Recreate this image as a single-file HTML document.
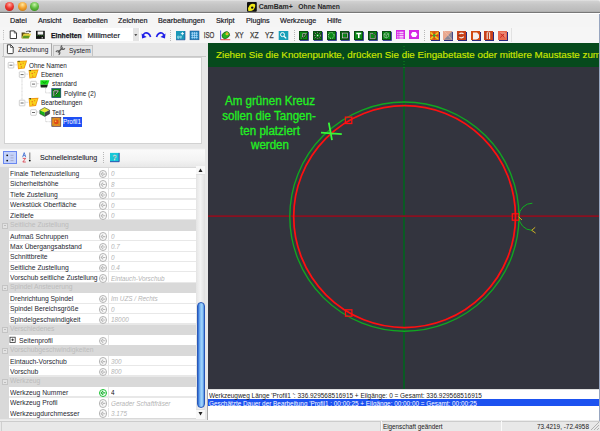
<!DOCTYPE html>
<html><head><meta charset="utf-8">
<style>
*{margin:0;padding:0;box-sizing:border-box}
html,body{width:600px;height:431px;overflow:hidden;background:#ececec;font-family:"Liberation Sans",sans-serif;color:#111}
.a{position:absolute;white-space:nowrap}
svg{position:absolute;left:0;top:0;overflow:visible}
#title{left:0;top:0;width:600px;height:13.3px;background:linear-gradient(#e4e4e4 0,#d0d0d0 1.5px,#c6c6c6 40%,#bababa 92%,#a8a8a8);border-bottom:1.2px solid #787878;border-radius:3px 3px 0 0}
.light{position:absolute;top:2.2px;width:9px;height:9px;border-radius:50%}
#menu{left:0;top:13.3px;width:600px;height:13.7px;background:#f5f5f5;border-top:1px solid #fff}
#menu span{position:absolute;top:1.4px;font-size:8px;line-height:10px;color:#1a1a26;-webkit-text-stroke:0.2px #1a1a26;transform:scaleX(0.9);transform-origin:0 0}
#tb{left:0;top:27px;width:600px;height:16px;background:#f6f6f6}
.ic{position:absolute;top:31px;width:9px;height:9px}
.gi{background:#0a8a16;border:0.6px solid #0a4a12;box-shadow:0.8px 0.8px 0 #18208a}
.mi{background:#d428e4}
.oi{background:#d8501a;box-shadow:1px 1px 0 #2a2a80}
.sep{position:absolute;top:30px;width:1px;height:11px;border-left:1px dotted #b8b8b8}
#left{left:0;top:43px;width:208px;height:377px;background:#e8e8e8}
#canvas{left:208px;top:43px;width:391px;height:346px;background:#33343e;overflow:hidden}
#msg{left:207px;top:389px;width:392px;height:31.3px;background:#fff;border-left:1px solid #a8a8a8;border-top:1px solid #e0e0e0}
#status{left:0;top:420.8px;width:600px;height:10.2px;background:#e8e8e8;border-top:1px solid #cccccc}
.tree span.t{position:absolute;font-size:6.3px;color:#1a1a2a}
.pg{position:absolute;left:0;width:196.2px;height:10.42px}
.pg .n{position:absolute;left:10px;top:1.7px;font-size:7.7px;line-height:1;color:#262630;transform:scaleX(0.88);transform-origin:0 0}
.pg .v{position:absolute;left:110.5px;top:2.1px;font-size:7.4px;line-height:1;font-style:italic;color:#b4b4b4;transform:scaleX(0.862);transform-origin:0 0}
.pg.c{background:#d9d9d9}
.pg.c .n{color:#bcbcbc;top:0.5px}
.pg.r{background:linear-gradient(#fff 0,#fff 9.5px,#e8e8e8 9.5px)}
.pg.r:before{content:"";position:absolute;left:0;top:0;width:8.7px;height:10.42px;background:#d9d9d9}
.pg .o{position:absolute;left:98.8px;top:1.5px;width:8.6px;height:8.6px;border-radius:50%;border:1px solid #b4b4b4;background:#fafafa}
.pg .o.g{border:1.2px solid #18c030;background:#fff}
.pg .d{position:absolute;left:108.3px;top:0;width:1px;height:9.5px;background:#e4e4e4}
.cb{position:absolute;left:1.5px;top:2.3px;width:6px;height:6px;border:1px solid #c4c4c4;background:#e2e2e2}
.cb:after{content:"";position:absolute;left:1px;top:1.6px;width:2.5px;height:0.8px;background:#bcbcbc}
</style></head><body>

<div id="title" class="a">
  <div class="light" style="left:4.6px;background:radial-gradient(circle at 50% 30%,#ffb0a8 0,#f03a30 45%,#b01010 100%)"></div>
  <div class="light" style="left:17.6px;background:radial-gradient(circle at 50% 30%,#ffe8a0 0,#f4a430 45%,#b86a08 100%)"></div>
  <div class="light" style="left:30.2px;background:radial-gradient(circle at 50% 30%,#c8f4a8 0,#62be40 45%,#2a8010 100%)"></div>
  <svg width="600" height="20"><rect x="247" y="2" width="9.8" height="9.8" rx="1" fill="#111"/><path d="M248.2 10.8q-0.6-3.6 1.6-5.8q2.6-2.2 5.2-0.8q0.8 2.8-1.2 5.2q-2.4 2.2-5.6 1.4z" fill="#f0e818"/><circle cx="252.2" cy="7.6" r="1.2" fill="#111"/></svg>
  <span class="a" style="left:258.7px;top:3px;font-size:6.95px;font-weight:bold;color:#262626">CamBam+</span>
  <span class="a" style="left:298.3px;top:3px;font-size:6.75px;font-weight:bold;color:#262626">Ohne Namen</span>
</div>

<div id="menu" class="a">
<span style="left:10px">Datei</span>
<span style="left:37.5px">Ansicht</span>
<span style="left:73px">Bearbeiten</span>
<span style="left:117.5px">Zeichnen</span>
<span style="left:158.3px">Bearbeitungen</span>
<span style="left:216px">Skript</span>
<span style="left:245.7px">Plugins</span>
<span style="left:280px">Werkzeuge</span>
<span style="left:326.7px">Hilfe</span>
</div>
<div id="tb" class="a"></div>
<svg width="600" height="431" style="z-index:2">
<rect x="3" y="30" width="1" height="1" fill="#b8b8b8"/>
<rect x="3" y="32.2" width="1" height="1" fill="#b8b8b8"/>
<rect x="3" y="34.4" width="1" height="1" fill="#b8b8b8"/>
<rect x="3" y="36.6" width="1" height="1" fill="#b8b8b8"/>
<rect x="3" y="38.8" width="1" height="1" fill="#b8b8b8"/>
<path d="M10.2 30.9h4.1l2.2 2.2v5.4h-6.3z" fill="#fff" stroke="#222" stroke-width="0.9"/><path d="M14.3 30.9v2.2h2.2" fill="none" stroke="#222" stroke-width="0.6"/>
<path d="M21.6 32.4h3l0.8 0.8h3.6v5h-7.4z" fill="#5a4a10"/><path d="M21.6 38.2l2-4.4h7.6l-2.2 4.4z" fill="#e8d040"/><path d="M22.2 38.2l1.4-2.4h6.2l-1.2 2.4z" fill="#5a9a20"/><path d="M25.8 32q2.2-1.6 4.2-0.6" fill="none" stroke="#333" stroke-width="0.8"/><path d="M29.6 30.6l1.6 1.2-1.8 0.8z" fill="#111"/>
<rect x="36" y="30.8" width="8.8" height="8.1" fill="#141414"/><rect x="37.6" y="31.5" width="5.6" height="3.1" fill="#f4f4f4"/><path d="M36.8 35.6h7.2" stroke="#2a8a20" stroke-width="0.8" stroke-dasharray="1 1"/><rect x="41.6" y="37.2" width="1.3" height="1.2" fill="#ddd"/>
<path d="M150.6 37 C149.6 33.6 147.2 32.4 145.2 33.1 C144.2 33.5 143.6 34.3 143.2 35.2" fill="none" stroke="#2020e8" stroke-width="1.6"/><path d="M141.6 33.4L142.1 38.4L146.6 37.1z" fill="#2020e8"/>
<path d="M156.5 37 C157.5 33.6 159.9 32.4 161.9 33.1 C162.9 33.5 163.5 34.3 163.9 35.2" fill="none" stroke="#2020e8" stroke-width="1.6"/><path d="M165.5 33.4L165.0 38.4L160.5 37.1z" fill="#2020e8"/>
<rect x="176" y="31" width="9" height="8.8" fill="#1a98b8"/><path d="M176 39.8h9v-8.8" fill="none" stroke="#1a3a90" stroke-width="0.6"/><path d="M180.8 33.6h3.2 M182.4 32v3.2" stroke="#f0faff" stroke-width="0.9"/><path d="M177.6 36.2h1.6v1.6h-1.6z M180.2 36.2h1.2v1.2h-1.2z M177.6 38.2h1.4 M180.2 38.2h1.2" fill="none" stroke="#c8eef8" stroke-width="0.6"/>
<rect x="190" y="31" width="9" height="8.8" fill="#2288c0"/><path d="M191.2 33.2h6.6 M191.2 35.4h6.6 M191.2 37.6h6.6 M192.4 32v6.6 M194.5 32v6.6 M196.6 32v6.6" stroke="#b8e0ff" stroke-width="0.7"/><rect x="190" y="31" width="9" height="8.8" fill="none" stroke="#1a4a8a" stroke-width="0.5"/>
<text x="203.8" y="38.2" font-size="8.2" font-family="Liberation Sans" fill="#4a4040" stroke="#4a4040" stroke-width="0.25" textLength="10.6" lengthAdjust="spacingAndGlyphs">ISO</text>
<path d="M220.6 30.5v9.2" fill="none" stroke="#3030e0" stroke-width="0.8"/><path d="M220.6 39.7h9.6" stroke="#e82020" stroke-width="0.8"/><ellipse cx="225.8" cy="35.2" rx="4" ry="3.2" transform="rotate(-35 225.8 35.2)" fill="#28b020" stroke="#1a3a10" stroke-width="0.5"/><circle cx="227" cy="33.8" r="1.5" fill="#f0e030"/><circle cx="227" cy="33.8" r="0.6" fill="#c03030"/>
<text x="235" y="38.2" font-size="8.2" font-family="Liberation Sans" fill="#404040" stroke="#404040" stroke-width="0.25" textLength="8.6" lengthAdjust="spacingAndGlyphs">XY</text>
<text x="250" y="38.2" font-size="8.2" font-family="Liberation Sans" fill="#404040" stroke="#404040" stroke-width="0.25" textLength="8.6" lengthAdjust="spacingAndGlyphs">XZ</text>
<text x="265" y="38.2" font-size="8.2" font-family="Liberation Sans" fill="#404040" stroke="#404040" stroke-width="0.25" textLength="8.6" lengthAdjust="spacingAndGlyphs">YZ</text>
<rect x="278.7" y="31" width="9.6" height="9" fill="#18a0b8"/><circle cx="282.5" cy="34.6" r="2" fill="none" stroke="#fff" stroke-width="1"/><path d="M284 36.2l2.2 2.2" stroke="#fff" stroke-width="1.3"/>
</svg>
<div class="sep" style="left:170px"></div>
<div class="sep" style="left:294px"></div>
<div class="sep" style="left:424px"></div>
<div class="a" style="left:510.5px;top:28px;width:1px;height:14px;background:#e2e2e2"></div>
<span class="a" style="left:51.3px;top:31.64px;font-size:7.4px;line-height:1;transform:scaleX(0.92);transform-origin:0 0;font-weight:bold;color:#141420;-webkit-text-stroke:0.25px #141420">Einheiten</span>
<div class="a" style="left:85px;top:28.4px;width:54.5px;height:13px;background:#fff"></div>
<div class="a" style="left:132.6px;top:28.4px;width:6.3px;height:13px;background:#e4e4e4"></div>
<svg width="600" height="431" style="z-index:3"><path d="M134.3 34.2h3l-1.5 1.8z" fill="#222"/></svg>
<span class="a" style="left:87.5px;top:30.6px;font-size:7.6px;color:#1a1a2a;-webkit-text-stroke:0.18px #1a1a2a">Millimeter</span>
<div class="ic gi" style="left:299.2px"></div>
<div class="ic gi" style="left:313px"></div>
<div class="ic gi" style="left:326.7px"></div>
<div class="ic gi" style="left:340.3px"></div>
<div class="ic gi" style="left:354.2px"></div>
<div class="ic gi" style="left:368px"></div>
<div class="ic gi" style="left:381.7px"></div>
<svg width="600" height="431" style="z-index:3" fill="none" stroke="#e0ece0" stroke-width="0.8">
<path d="M301.6 38.4l1.2-1.2v-3.4h3.8l-2.8 3.8" stroke="#0a1a0a" stroke-width="1.2"/><path d="M301.4 38.2l1.2-1.2v-3.4h3.8l-2.8 3.8" stroke="#e8f0e8" stroke-width="0.6"/>
<circle cx="317.6" cy="35.5" r="2.9" stroke="#0a1a0a" stroke-width="1.2"/><circle cx="317.6" cy="35.5" r="2.9" stroke-dasharray="1.2 0.9" stroke-width="0.7"/><circle cx="317.6" cy="35.5" r="0.7" fill="#e0ece0" stroke="none"/>
<circle cx="331.2" cy="35.5" r="2.9" stroke-dasharray="0.9 1.4" stroke-width="1"/>
<rect x="342.4" y="33.1" width="5" height="4.8" stroke="#0a1a0a" stroke-width="1.4"/><rect x="342.4" y="33.1" width="5" height="4.8" stroke="#d8e8d8" stroke-width="0.7"/>
<path d="M356.3 33.6h4.9 M358.75 33.6v4.4" stroke="#fff" stroke-width="1.5"/>
<path d="M370.2 38.6v-5.2h2.8l2.2 2.2v3z" stroke="#0a1a0a" stroke-width="1.2"/><path d="M370.2 38.6v-5.2h2.8l2.2 2.2v3z" stroke="#e8f4e8" stroke-width="0.6"/>
<path d="M384 34l2.2-1.4 2.4 1.2v2.8l-2.2 1.4-2.4-1.2z M386.2 35.2v2.8 M384 34l2.2 1.2 2.4-1.4" stroke="#b8c8b8" stroke-width="0.6"/>
</svg>
<div class="ic mi" style="left:395.5px;width:9.5px;top:30.2px;height:8.6px"></div>
<div class="ic mi" style="left:409.2px;width:9.5px;top:30.2px;height:8.6px"></div>
<svg width="600" height="431" style="z-index:3"><path d="M397.3 32.2h1.2 M397.3 34.2h1.2 M397.3 36.2h1.2 M397.3 38h1.2 M399.3 32.2h4.2 M399.3 34.2h4.2 M399.3 36.2h4.2 M399.3 38h4.2" stroke="#fff" stroke-width="1.1"/><path d="M410.8 34.5l1.6-2.6h3.4l1.6 2.6-1.6 2.6h-3.4z" fill="#fff"/></svg>
<div class="ic oi" style="left:429.7px;background:#d86a1a"></div>
<div class="ic oi" style="left:443.3px;background:#e8a890"></div>
<div class="ic oi" style="left:457px;background:#c8401a"></div>
<div class="ic oi" style="left:470.8px;background:#d04a10"></div>
<div class="ic oi" style="left:484.2px;background:#c8401a"></div>
<div class="ic oi" style="left:498px;background:#e86a50"></div>
<svg width="600" height="431" style="z-index:3">
<path d="M430.5 32.5l7.5 6.5 M438 32.5l-7.5 6.5" stroke="#f0d020" stroke-width="1.6"/><path d="M434.2 31.5v8 M430 35.5h8.5" stroke="#e04010" stroke-width="1.2"/><circle cx="434.2" cy="35.5" r="1.4" fill="#40a030"/>
<path d="M444 39.8l8.3-8.8v8.8z" fill="#8a8898"/><path d="M444 31l8.3 8.8" stroke="#f8c8b0" stroke-width="0.6"/>
<path d="M459.2 34.4q1.8-2.2 4.4-0.6 M463.8 36.6q-1.8 2.2-4.4 0.6" fill="none" stroke="#f4f4f4" stroke-width="1.1"/><path d="M458.5 35.5l1.4-0.8" stroke="#222" stroke-width="0.8"/>
<path d="M473 32.6h4l2 2v2.6q-1 2.2-3 2.2h-3z" fill="#f4f0ec"/>
<path d="M487.2 32.4v6.6 M489.6 32.4v6.6" stroke="#f0e4dc" stroke-width="1.1"/><path d="M487.2 32.4q1.2-1 2.4 0" fill="none" stroke="#f0e4dc" stroke-width="0.8"/>
<path d="M500.2 33.2l4.6 4.4 M504.8 33.2l-4.6 4.4" stroke="#c82020" stroke-width="0.9"/><path d="M500 33h5v4.6" fill="none" stroke="#fae0d8" stroke-width="0.5"/>
</svg>
<div id="left" class="a"></div>
<div class="a" style="left:2.5px;top:43.3px;width:49.5px;height:13px;background:#f0f0f0;border:1px solid #c8c8c8;border-right-color:#a8a8a8;border-bottom:none"></div>
<div class="a" style="left:52.5px;top:45px;width:40px;height:11.2px;background:#e4e4e4;border:1px solid #c4c4c4;border-bottom:none"></div>
<span class="a" style="left:18.1px;top:45.94px;font-size:7.4px;line-height:1;transform:scaleX(0.878);transform-origin:0 0;color:#1a1a2a">Zeichnung</span>
<span class="a" style="left:69.2px;top:47.14px;font-size:7.4px;line-height:1;transform:scaleX(0.878);transform-origin:0 0;color:#1a1a2a">System</span>
<svg width="600" height="431" style="z-index:3">
<path d="M7.4 44.8h3.4l2.4 2.4v5.6q0 0.8-0.8 0.8h-4.2q-0.8 0-0.8-0.8z" fill="#fff" stroke="#2a2a2a" stroke-width="0.9"/><path d="M10.6 44.8v2.6h2.6" fill="none" stroke="#2a2a2a" stroke-width="0.7"/>
<path d="M57.8 52.6l5-5" stroke="#5a5a5a" stroke-width="1.4"/><path d="M62.2 45.6a2 2 0 1 0 2.6 2.6" fill="none" stroke="#5a5a5a" stroke-width="1.2"/><path d="M58.6 54.6a2 2 0 1 0 -2.6 -2.6" fill="none" stroke="#5a5a5a" stroke-width="1.2"/>
</svg>
<div class="a" style="left:2px;top:56px;width:204px;height:1px;background:#c8c8c8"></div>
<div class="a tree" style="left:3.7px;top:57px;width:198.5px;height:87px;background:#fff;border:1px solid #d2d2d2">
</div>
<svg width="600" height="431" style="z-index:3">
<path d="M22 77v23 M13.1 64.9h4 M24.3 74.1h4.4 M24.3 102.3h4.4 M45.6 88v4.9h6 M45.6 116.5v5.2h6 M35.6 83.7h3.5 M35.6 112h3.5" fill="none" stroke="#c4c4c4" stroke-width="0.7" stroke-dasharray="1 0.4"/>
<rect x="8.2" y="62.400000000000006" width="5.6" height="5.6" fill="#fff" stroke="#b0b0b0" stroke-width="0.6" rx="0.6"/><path d="M9.5 65.2h2.9999999999999996" stroke="#444" stroke-width="0.8"/>
<rect x="19.3" y="71.8" width="5.6" height="5.6" fill="#fff" stroke="#b0b0b0" stroke-width="0.6" rx="0.6"/><path d="M20.6 74.6h2.9999999999999996" stroke="#444" stroke-width="0.8"/>
<rect x="30.7" y="81.3" width="5.6" height="5.6" fill="#fff" stroke="#b0b0b0" stroke-width="0.6" rx="0.6"/><path d="M32.0 84.1h2.9999999999999996" stroke="#444" stroke-width="0.8"/>
<rect x="19.3" y="100.2" width="5.6" height="5.6" fill="#fff" stroke="#b0b0b0" stroke-width="0.6" rx="0.6"/><path d="M20.6 103h2.9999999999999996" stroke="#444" stroke-width="0.8"/>
<rect x="30.7" y="109.7" width="5.6" height="5.6" fill="#fff" stroke="#b0b0b0" stroke-width="0.6" rx="0.6"/><path d="M32.0 112.5h2.9999999999999996" stroke="#444" stroke-width="0.8"/>
<path d="M17.2 60.900000000000006L27.2 60.400000000000006L24.6 68.5L18.0 69.30000000000001z" fill="#f29a12"/><path d="M18.2 61.900000000000006L26.0 61.50000000000001L23.799999999999997 67.7L18.7 68.30000000000001z" fill="#f8d41c"/><circle cx="20.8" cy="64.30000000000001" r="0.8" fill="#f07818"/><circle cx="23.2" cy="63.300000000000004" r="0.7" fill="#f09018"/><circle cx="21.4" cy="66.9" r="0.7" fill="#e86818"/><path d="M17.2 60.900000000000006l2.4-0.2v1.6z" fill="#3a5a18"/>
<path d="M28.6 70.1L38.6 69.6L36.0 77.69999999999999L29.400000000000002 78.5z" fill="#f29a12"/><path d="M29.6 71.1L37.400000000000006 70.69999999999999L35.2 76.89999999999999L30.1 77.5z" fill="#f8d41c"/><circle cx="32.2" cy="73.5" r="0.8" fill="#f07818"/><circle cx="34.6" cy="72.5" r="0.7" fill="#f09018"/><circle cx="32.800000000000004" cy="76.1" r="0.7" fill="#e86818"/><path d="M28.6 70.1l2.4-0.2v1.6z" fill="#3a5a18"/>
<path d="M28.6 98.3L38.6 97.8L36.0 105.89999999999999L29.400000000000002 106.7z" fill="#f29a12"/><path d="M29.6 99.3L37.400000000000006 98.89999999999999L35.2 105.1L30.1 105.7z" fill="#f8d41c"/><circle cx="32.2" cy="101.7" r="0.8" fill="#f07818"/><circle cx="34.6" cy="100.7" r="0.7" fill="#f09018"/><circle cx="32.800000000000004" cy="104.3" r="0.7" fill="#e86818"/><path d="M28.6 98.3l2.4-0.2v1.6z" fill="#3a5a18"/>
<path d="M40.4 80.2h9l-1.6 4.6h-7.4z" fill="#1ae018"/><path d="M40.4 84.8h7.4l-0.8 2.6h-6.2z" fill="#1a2a1a"/><path d="M42.5 81.4l1.8 1.8 2.4-2" stroke="#0a6a0a" stroke-width="0.7" fill="none"/>
<rect x="51.8" y="88.6" width="9" height="9" fill="#0a8a16" stroke="#10307a" stroke-width="0.6"/><path d="M53.8 96.2v-5.4h4.6l-2.6 3.6" fill="none" stroke="#0a1a0a" stroke-width="1.5"/><path d="M53.8 96.2v-5.4h4.6l-2.6 3.6" fill="none" stroke="#f0f4f0" stroke-width="0.8"/>
<path d="M39.8 110.2l4.8-2.6 5 2.4-4.8 2.6z" fill="#e8e830"/><path d="M39.8 110.2v3.6l5 2.6v-3.8z" fill="#18b018"/><path d="M44.8 112.6v3.8l4.8-2.6v-3.8z" fill="#404848"/><path d="M39.8 110.2l4.8-2.6 5 2.4v3.8l-4.8 2.6-5-2.6z" fill="none" stroke="#223" stroke-width="0.5"/>
<rect x="51.8" y="117.4" width="9" height="9" fill="#e88a20"/><path d="M52.4 126l8.2-8.2 M52.6 118.2l7.8 7.8" stroke="#70a830" stroke-width="1" stroke-dasharray="1.2 1"/><circle cx="56.3" cy="121.9" r="2.4" fill="#e04818"/><circle cx="55.6" cy="121.2" r="0.8" fill="#f8d040"/><rect x="51.8" y="117.4" width="9" height="9" fill="none" stroke="#3a2a50" stroke-width="0.6"/>
</svg>
<span class="a" style="left:29.2px;top:61.54px;font-size:7.4px;line-height:1;transform:scaleX(0.86);transform-origin:0 0;color:#161622">Ohne Namen</span>
<span class="a" style="left:41.2px;top:70.74px;font-size:7.4px;line-height:1;transform:scaleX(0.86);transform-origin:0 0;color:#161622">Ebenen</span>
<span class="a" style="left:51.8px;top:80.34px;font-size:7.4px;line-height:1;transform:scaleX(0.86);transform-origin:0 0;color:#161622">standard</span>
<span class="a" style="left:64px;top:89.54px;font-size:7.4px;line-height:1;transform:scaleX(0.86);transform-origin:0 0;color:#161622">Polyline (2)</span>
<span class="a" style="left:41.2px;top:98.94px;font-size:7.4px;line-height:1;transform:scaleX(0.86);transform-origin:0 0;color:#161622">Bearbeitungen</span>
<span class="a" style="left:51.8px;top:108.64px;font-size:7.4px;line-height:1;transform:scaleX(0.86);transform-origin:0 0;color:#161622">Teil1</span>
<div class="a" style="left:62.6px;top:117.1px;width:19.7px;height:9.6px;background:#1e50f4"></div>
<span class="a" style="left:63.2px;top:118.34px;font-size:7.4px;line-height:1;transform:scaleX(0.86);transform-origin:0 0;color:#fff">Profil1</span>
<div class="a" style="left:0;top:147.6px;width:205px;height:19.7px;background:linear-gradient(#e6e6e6 0,#fafafa 2px,#f4f4f4 60%,#e8e8e8)"></div>
<div class="a" style="left:3.2px;top:151.2px;width:13.8px;height:13.2px;background:#c4d2fa;border:1px solid #6a88f0"></div>
<svg width="600" height="431" style="z-index:3">
<circle cx="7.2" cy="155.3" r="0.9" fill="#111"/><circle cx="7.2" cy="160.6" r="0.9" fill="#111"/><path d="M10.5 155.3h3 M10.5 157.9h3 M10.5 160.6h3" stroke="#9a9ab8" stroke-width="0.7"/>
<path d="M22.6 157.2l1.6-4.6 1.6 4.6 M23.2 155.6h2" fill="none" stroke="#3a6ad0" stroke-width="0.8"/><path d="M22.8 158.4h2.8l-2.8 3.6h3" fill="none" stroke="#d83040" stroke-width="0.8"/><path d="M29.8 152.4v7" stroke="#888" stroke-width="1.1"/><circle cx="29.8" cy="160.6" r="0.9" fill="#111"/>
<rect x="110" y="152.9" width="9.2" height="8.8" fill="#18c8d8"/><path d="M110 161.7h9.2v-8.8" fill="none" stroke="#1830a0" stroke-width="0.8"/><text x="112.6" y="160.2" font-size="7" font-family="Liberation Sans" fill="#333" stroke="#fff" stroke-width="0.3">?</text>
</svg>
<div class="sep" style="left:103px;top:152px;height:11px"></div>
<span class="a" style="left:39.9px;top:154.30px;font-size:7.7px;line-height:1;transform:scaleX(0.923);transform-origin:0 0;color:#1a1a2a;-webkit-text-stroke:0.1px #1a1a2a">Schnelleinstellung</span>
<div class="a" style="left:0;top:167.3px;width:196.2px;height:251.3px;background:#d9d9d9;overflow:hidden">
<div class="pg r" style="top:1.00px"><span class="n">Finale Tiefenzustellung</span><div class="o"></div><div class="d"></div><span class="v">0</span></div>
<div class="pg r" style="top:11.42px"><span class="n">Sicherheitshöhe</span><div class="o"></div><div class="d"></div><span class="v">8</span></div>
<div class="pg r" style="top:21.84px"><span class="n">Tiefe Zustellung</span><div class="o"></div><div class="d"></div><span class="v">0</span></div>
<div class="pg r" style="top:32.26px"><span class="n">Werkstück Oberfläche</span><div class="o"></div><div class="d"></div><span class="v">0</span></div>
<div class="pg r" style="top:42.68px"><span class="n">Zieltiefe</span><div class="o"></div><div class="d"></div><span class="v">0</span></div>
<div class="pg c" style="top:53.10px"><div class="cb"></div><span class="n">Seitliche Zustellung</span></div>
<div class="pg r" style="top:63.52px"><span class="n">Aufmaß Schruppen</span><div class="o"></div><div class="d"></div><span class="v">0</span></div>
<div class="pg r" style="top:73.94px"><span class="n">Max Übergangsabstand</span><div class="o"></div><div class="d"></div><span class="v">0.7</span></div>
<div class="pg r" style="top:84.36px"><span class="n">Schnittbreite</span><div class="o"></div><div class="d"></div><span class="v">0</span></div>
<div class="pg r" style="top:94.78px"><span class="n">Seitliche Zustellung</span><div class="o"></div><div class="d"></div><span class="v">0.4</span></div>
<div class="pg r" style="top:105.20px"><span class="n">Vorschub seitliche Zustellung</span><div class="o"></div><div class="d"></div><span class="v">Eintauch-Vorschub</span></div>
<div class="pg c" style="top:115.62px"><div class="cb"></div><span class="n">Spindel Ansteuerung</span></div>
<div class="pg r" style="top:126.04px"><span class="n">Drehrichtung Spindel</span><div class="o"></div><div class="d"></div><span class="v">Im UZS / Rechts</span></div>
<div class="pg r" style="top:136.46px"><span class="n">Spindel Bereichsgröße</span><div class="o"></div><div class="d"></div><span class="v">0</span></div>
<div class="pg r" style="top:146.88px"><span class="n">Spindelgeschwindigkeit</span><div class="o"></div><div class="d"></div><span class="v">18000</span></div>
<div class="pg c" style="top:157.30px"><div class="cb"></div><span class="n">Verschiedenes</span></div>
<div class="pg r" style="top:167.72px"><span class="n" style="left:18.5px">Seitenprofil</span><div class="o"></div><div class="d"></div></div>
<div class="pg c" style="top:178.14px"><div class="cb"></div><span class="n">Vorschubgeschwindigkeiten</span></div>
<div class="pg r" style="top:188.56px"><span class="n">Eintauch-Vorschub</span><div class="o"></div><div class="d"></div><span class="v">300</span></div>
<div class="pg r" style="top:198.98px"><span class="n">Vorschub</span><div class="o"></div><div class="d"></div><span class="v">800</span></div>
<div class="pg c" style="top:209.40px"><div class="cb"></div><span class="n">Werkzeug</span></div>
<div class="pg r" style="top:219.82px"><span class="n">Werkzeug Nummer</span><div class="o g"></div><div class="d"></div><span class="v" style="font-style:normal;color:#111">4</span></div>
<div class="pg r" style="top:230.24px"><span class="n">Werkzeug Profil</span><div class="o"></div><div class="d"></div><span class="v">Gerader Schaftfräser</span></div>
<div class="pg r" style="top:240.66px"><span class="n">Werkzeugdurchmesser</span><div class="o"></div><div class="d"></div><span class="v">3.175</span></div>
</div>
<svg width="600" height="431" style="z-index:3"><path d="M105.4 174.10h-2.6 M103.2 172.10l-2 2 2 2" fill="none" stroke="#b8b8b8" stroke-width="1.1"/><path d="M105.4 184.52h-2.6 M103.2 182.52l-2 2 2 2" fill="none" stroke="#b8b8b8" stroke-width="1.1"/><path d="M105.4 194.94h-2.6 M103.2 192.94l-2 2 2 2" fill="none" stroke="#b8b8b8" stroke-width="1.1"/><path d="M105.4 205.36h-2.6 M103.2 203.36l-2 2 2 2" fill="none" stroke="#b8b8b8" stroke-width="1.1"/><path d="M105.4 215.78h-2.6 M103.2 213.78l-2 2 2 2" fill="none" stroke="#b8b8b8" stroke-width="1.1"/><path d="M105.4 236.62h-2.6 M103.2 234.62l-2 2 2 2" fill="none" stroke="#b8b8b8" stroke-width="1.1"/><path d="M105.4 247.04h-2.6 M103.2 245.04l-2 2 2 2" fill="none" stroke="#b8b8b8" stroke-width="1.1"/><path d="M105.4 257.46h-2.6 M103.2 255.46l-2 2 2 2" fill="none" stroke="#b8b8b8" stroke-width="1.1"/><path d="M105.4 267.88h-2.6 M103.2 265.88l-2 2 2 2" fill="none" stroke="#b8b8b8" stroke-width="1.1"/><path d="M105.4 278.30h-2.6 M103.2 276.30l-2 2 2 2" fill="none" stroke="#b8b8b8" stroke-width="1.1"/><path d="M105.4 299.14h-2.6 M103.2 297.14l-2 2 2 2" fill="none" stroke="#b8b8b8" stroke-width="1.1"/><path d="M105.4 309.56h-2.6 M103.2 307.56l-2 2 2 2" fill="none" stroke="#b8b8b8" stroke-width="1.1"/><path d="M105.4 319.98h-2.6 M103.2 317.98l-2 2 2 2" fill="none" stroke="#b8b8b8" stroke-width="1.1"/><rect x="10" y="337.22" width="5.2" height="5.2" fill="#fff" stroke="#333" stroke-width="0.8"/><path d="M11.3 339.82h2.6 M12.6 338.52v2.6" stroke="#222" stroke-width="0.8"/><path d="M105.4 340.82h-2.6 M103.2 338.82l-2 2 2 2" fill="none" stroke="#b8b8b8" stroke-width="1.1"/><path d="M105.4 361.66h-2.6 M103.2 359.66l-2 2 2 2" fill="none" stroke="#b8b8b8" stroke-width="1.1"/><path d="M105.4 372.08h-2.6 M103.2 370.08l-2 2 2 2" fill="none" stroke="#b8b8b8" stroke-width="1.1"/><path d="M105.4 392.92h-2.6 M103.2 390.92l-2 2 2 2" fill="none" stroke="#18b030" stroke-width="1.1"/><path d="M105.4 403.34h-2.6 M103.2 401.34l-2 2 2 2" fill="none" stroke="#b8b8b8" stroke-width="1.1"/><path d="M105.4 413.76h-2.6 M103.2 411.76l-2 2 2 2" fill="none" stroke="#b8b8b8" stroke-width="1.1"/></svg>
<div class="a" style="left:196.2px;top:165.6px;width:8.8px;height:253.4px;background:linear-gradient(90deg,#e4e4e4,#f4f4f4 50%,#e0e0e0)"></div>
<div class="a" style="left:196.2px;top:165.6px;width:8.8px;height:9.3px;background:#f8f8f8;border-bottom:1px solid #e0e0e0"></div>
<div class="a" style="left:196.2px;top:408.8px;width:8.8px;height:10px;background:#f8f8f8;border-top:1px solid #e0e0e0"></div>
<div class="a" style="left:196.5px;top:302.4px;width:8.3px;height:106px;border-radius:4.2px;background:linear-gradient(90deg,#2a60c8 0,#5a9aec 18%,#8cc6f8 45%,#a4d6fc 65%,#7ab8f2 85%,#4a80d8);border:0.6px solid #2858b8"></div>
<svg width="600" height="431" style="z-index:3"><path d="M198.5 172h4l-2-3.5z" fill="#222"/><path d="M198.5 412h4l-2 3.5z" fill="#222"/></svg>
<div id="canvas" class="a"></div>
<div class="a" style="left:208px;top:43px;width:391px;height:24px;background:#064a1c"></div>
<span class="a" style="left:216px;top:49.2px;font-size:9.8px;color:#cce800;-webkit-text-stroke:0.15px #cce800">Ziehen Sie die Knotenpunkte, drücken Sie die Eingabetaste oder mittlere Maustaste zum</span>
<div class="a" style="left:599.2px;top:13.5px;width:0.8px;height:407px;background:#98a6c0"></div>
<svg width="600" height="431" style="z-index:3">
<defs><clipPath id="cv"><rect x="208" y="67" width="391" height="322"/></clipPath></defs>
<g clip-path="url(#cv)">
<path d="M404 67v322" stroke="#0a5a24" stroke-width="2"/>
<path d="M208 216.2h391" stroke="#8a1020" stroke-width="1.8"/>
<circle cx="404.4" cy="216.6" r="114.6" fill="none" stroke="#10a820" stroke-width="1.35"/>
<circle cx="404.6" cy="216.6" r="110.9" fill="none" stroke="#ff1010" stroke-width="1.75"/>
<rect x="512.3" y="213.8" width="6.4" height="6.4" fill="none" stroke="#ff1010" stroke-width="1.3"/>
<rect x="345.40000000000003" y="117.1" width="6.4" height="6.4" fill="none" stroke="#ff1010" stroke-width="1.3"/>
<rect x="345.5" y="309.8" width="6.4" height="6.4" fill="none" stroke="#ff1010" stroke-width="1.3"/>
<path d="M519 216.5A13.3 13.3 0 0 1 532.4 203.2" fill="none" stroke="#10b020" stroke-width="1"/>
<path d="M519 217A13.3 13.3 0 0 0 531.7 230.3" fill="none" stroke="#10b020" stroke-width="1"/>
<path d="M535.2 227.3L531.7 230.3L535.6 233.1" fill="none" stroke="#e0c020" stroke-width="0.9"/>
<path d="M518.6 216.8L522 220" fill="none" stroke="#e0c020" stroke-width="0.9"/>
<path d="M321 132.6L341.8 134.2 M328.8 122.6L332 140.2" stroke="#38f838" stroke-width="1.8"/>
</g>
<path d="M404 46v22" stroke="#10b020" stroke-width="0.8" stroke-dasharray="0.8 2.2"/>
</svg>
<div class="a" style="left:209.8px;width:120px;top:93.50px;text-align:center;font-size:12.3px;color:#22f022;-webkit-text-stroke:0.3px #22f022;transform:scaleX(0.94)">Am grünen Kreuz</div>
<div class="a" style="left:209px;width:120px;top:108.70px;text-align:center;font-size:12.3px;color:#22f022;-webkit-text-stroke:0.3px #22f022;transform:scaleX(0.94)">sollen die Tangen-</div>
<div class="a" style="left:209.8px;width:120px;top:123.90px;text-align:center;font-size:12.3px;color:#22f022;-webkit-text-stroke:0.3px #22f022;transform:scaleX(0.94)">ten platziert</div>
<div class="a" style="left:210px;width:120px;top:138.00px;text-align:center;font-size:12.3px;color:#22f022;-webkit-text-stroke:0.3px #22f022;transform:scaleX(0.94)">werden</div>
<div id="msg" class="a"></div>
<div class="a" style="left:208px;top:399.2px;width:391px;height:7.3px;background:#1d52f0"></div>
<span class="a" style="left:209.2px;top:391.69px;font-size:7px;line-height:1;transform:scaleX(0.922);transform-origin:0 0;color:#1a1a1a">Werkzeugweg Länge 'Profil1 ': 336.929568516915 + Eilgänge: 0 = Gesamt: 336.929568516915</span>
<span class="a" style="left:209.2px;top:399.59px;font-size:7px;line-height:1;transform:scaleX(0.91);transform-origin:0 0;color:#fff">Geschätzte Dauer der Bearbeitung 'Profil1 : 00:00:25 + Eilgänge: 00:00:00 = Gesamt: 00:00:25</span>
<div id="status" class="a"></div>
<div class="a" style="left:0.6px;top:421.8px;width:1px;height:9.2px;background:#cfcfcf"></div>
<div class="a" style="left:380px;top:421px;width:1.5px;height:10px;background:linear-gradient(90deg,#d0d0d0 50%,#fafafa 50%)"></div>
<div class="a" style="left:500.5px;top:421px;width:1.5px;height:10px;background:linear-gradient(90deg,#d0d0d0 50%,#fafafa 50%)"></div>
<span class="a" style="left:383.2px;top:423.29px;font-size:7px;line-height:1;transform:scaleX(0.9);transform-origin:0 0;color:#1a1a1a">Eigenschaft geändert</span>
<span class="a" style="left:537.2px;top:423.29px;font-size:7px;line-height:1;transform:scaleX(0.915);transform-origin:0 0;color:#1a1a1a">73.4219, -72.4958</span>
<svg width="600" height="431" style="z-index:3"><path d="M591 430l8-8 M594 430l5-5 M597 430l2-2" stroke="#999" stroke-width="0.7"/></svg>
</body></html>
